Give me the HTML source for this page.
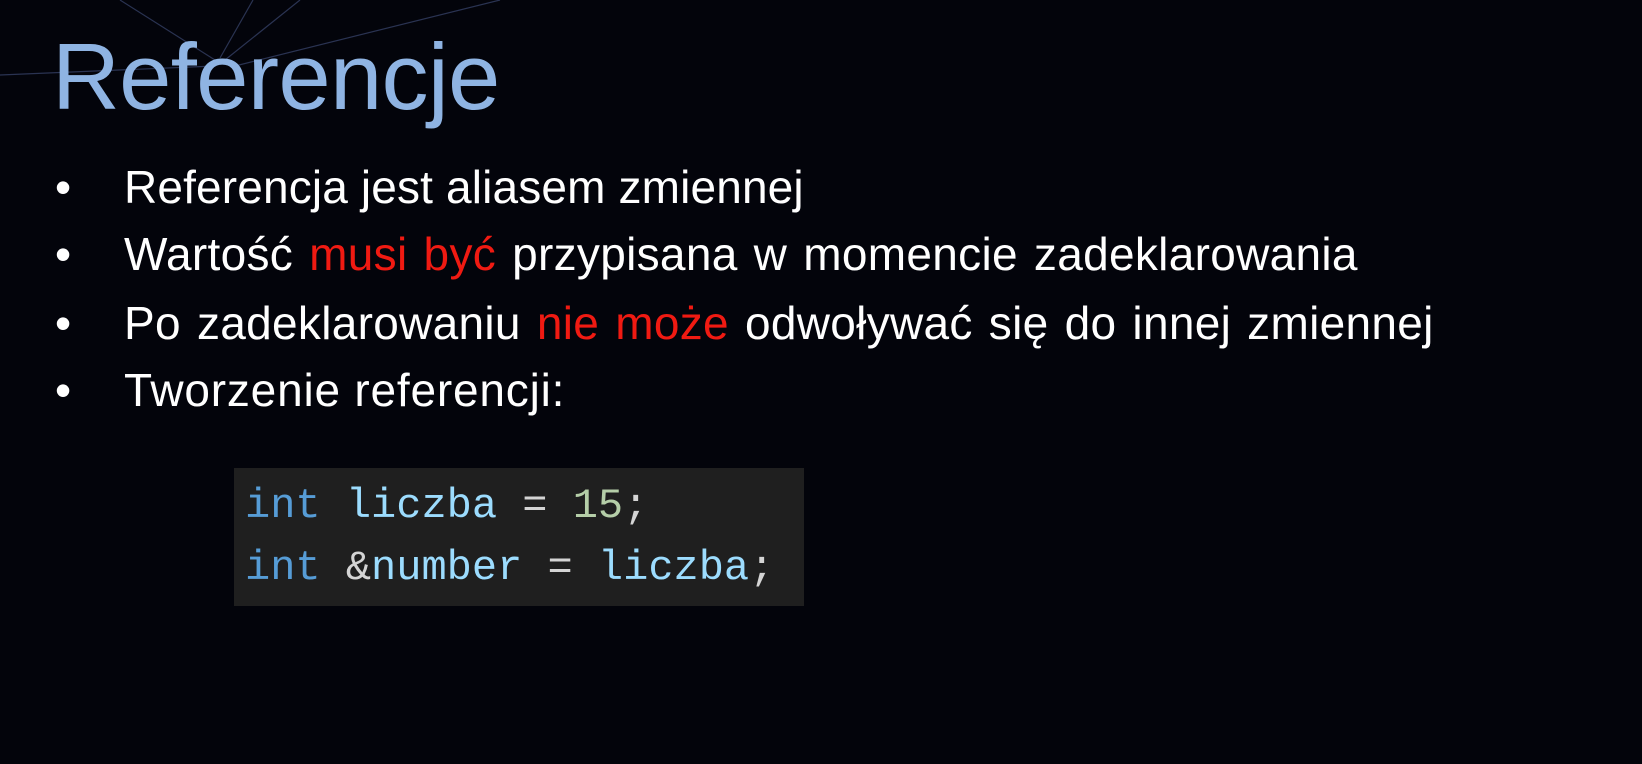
<!DOCTYPE html>
<html><head><meta charset="utf-8"><style>
html,body{margin:0;padding:0}
body{width:1642px;height:764px;background:#03040b;position:relative;overflow:hidden;font-family:"Liberation Sans",sans-serif}
svg.bg{position:absolute;left:0;top:0}
.t{position:absolute;left:52px;top:22px;font-size:94px;color:#8fb4e3;line-height:110px;letter-spacing:-0.7px}
.b{position:absolute;left:0;font-size:46px;color:#fff;line-height:50px;white-space:nowrap;letter-spacing:0.15px}
.b .d{position:absolute;left:55px}
.b .x{position:absolute;left:124px}
.r{color:#f01a12}
.code{position:absolute;left:234px;top:468px;width:570px;height:138px;background:#1f1f1f;font-family:"Liberation Mono",monospace;font-size:42px;color:#d4d4d4}
.code div{position:absolute;left:11px;white-space:pre;line-height:48px}
.k{color:#569cd6}.v{color:#9cdcfe}.n{color:#b5cea8}
</style></head><body>
<svg class="bg" width="700" height="120">
<g stroke="#2a3352" stroke-width="1.2" fill="none">
<line x1="120" y1="0" x2="215" y2="60"/>
<line x1="253" y1="0" x2="220" y2="58"/>
<line x1="300" y1="0" x2="225" y2="60"/>
<line x1="500" y1="0" x2="235" y2="66"/>
<line x1="0" y1="75" x2="215" y2="66"/>
</g></svg>
<div class="t">Referencje</div>
<div class="b" style="top:162px"><span class="d">•</span><span class="x">Referencja jest aliasem zmiennej</span></div>
<div class="b" style="top:229px;word-spacing:3px;letter-spacing:0.3px"><span class="d">•</span><span class="x">Wartość <span class="r">musi być</span> przypisana w momencie zadeklarowania</span></div>
<div class="b" style="top:298px;word-spacing:3px;letter-spacing:0.3px"><span class="d">•</span><span class="x">Po zadeklarowaniu <span class="r">nie może</span> odwoływać się do innej zmiennej</span></div>
<div class="b" style="top:365px;letter-spacing:0.8px"><span class="d">•</span><span class="x">Tworzenie referencji:</span></div>
<div class="code">
<div style="top:14px"><span class="k">int</span> <span class="v">liczba</span> = <span class="n">15</span>;</div>
<div style="top:76px"><span class="k">int</span> &amp;<span class="v">number</span> = <span class="v">liczba</span>;</div>
</div>
</body></html>
